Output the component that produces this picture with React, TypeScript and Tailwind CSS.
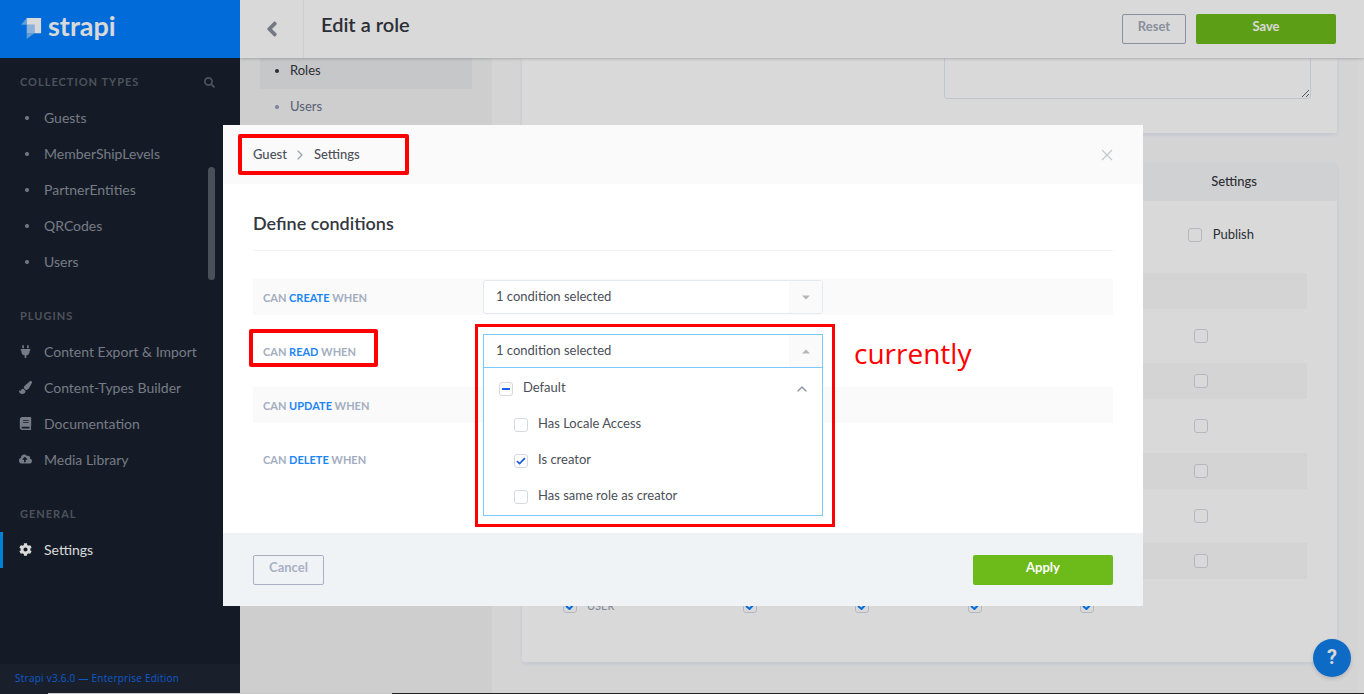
import { ChevronRight, ChevronUp } from "lucide-react";
import { FaAngleLeft, FaBook, FaCloudUploadAlt, FaCog, FaPaintBrush, FaPlug, FaSearch } from "react-icons/fa";

const contentTypes = ["Guests", "MemberShipLevels", "PartnerEntities", "QRCodes", "Users"];
const plugins = [
  { label: "Content Export & Import", icon: <FaPlug size={13} /> },
  { label: "Content-Types Builder", icon: <FaPaintBrush size={13} /> },
  { label: "Documentation", icon: <FaBook size={13} /> },
  { label: "Media Library", icon: <FaCloudUploadAlt size={14} /> },
];
const conditionRows = [
  { action: "CREATE", striped: true },
  { action: "READ", striped: false, open: true },
  { action: "UPDATE", striped: true },
  { action: "DELETE", striped: false },
];

function SectionTitle({ children }: { children: React.ReactNode }) {
  return (
    <div className="flex h-4 items-center justify-between pl-5 pr-[25px] text-[11px] font-bold uppercase tracking-[1px] text-[#5c606c]">
      {children}
    </div>
  );
}

function Checkbox({ checked, dash }: { checked?: boolean; dash?: boolean }) {
  return (
    <span className="flex h-[14px] w-[14px] shrink-0 items-center justify-center rounded-[3px] border border-[#d5d8de] bg-white">
      {checked && (
        <svg width="10" height="8" viewBox="0 0 10 8">
          <path d="M1 4.2 3.6 6.6 9 1.2" fill="none" stroke="#1c5de7" strokeWidth="1.8" />
        </svg>
      )}
      {dash && <span className="h-[2px] w-2 bg-[#1c5de7]" />}
    </span>
  );
}

function BlueCheck() {
  return (
    <span className="flex h-[14px] w-[14px] shrink-0 items-center justify-center rounded-[3px] border border-[#d5d8de] bg-white">
      <svg width="10" height="8" viewBox="0 0 10 8">
        <path d="M1 4 4.5 7 9 2" fill="none" stroke="#007eff" strokeWidth="2" />
      </svg>
    </span>
  );
}

function Caret({ up }: { up?: boolean }) {
  return (
    <span className="flex h-full w-[33px] items-center justify-center bg-[#fafafb]">
      <svg width="8" height="5" viewBox="0 0 8 5">
        <path d={up ? "M4 0.5 8 4.5H0z" : "M0 0.5h8L4 4.5z"} fill="#b3b5b9" />
      </svg>
    </span>
  );
}

function Sidebar() {
  return (
    <aside className="relative flex h-full w-[240px] shrink-0 flex-col bg-[#19202d]">
      <div className="flex h-[58px] items-center bg-[#007eff] pb-[3px] pl-5">
        <svg width="23" height="23" viewBox="0 0 24 24">
          <path d="M7 2h15v16h-7V9H7z" fill="#fff" />
          <path d="M7 9h8v9H7z" fill="#fff" fillOpacity=".65" />
          <path d="M7 2v7H1z" fill="#fff" fillOpacity=".45" />
          <path d="M7 18h8l-8 6z" fill="#fff" fillOpacity=".45" />
        </svg>
        <span className="mb-[5px] ml-[5px] font-['Lato',sans-serif] text-[27px] leading-none font-bold text-white">strapi</span>
      </div>

      <div className="pt-4">
        <SectionTitle>
          Collection Types
          <FaSearch size={11} />
        </SectionTitle>
        <ul className="mt-[10px]">
          {contentTypes.map((item) => (
            <li key={item} className="flex h-9 items-center pb-[2px] pl-[25px] text-[14px] text-[#8b919e]">
              <span className="mr-[15px] mt-[2px] h-[4px] w-[4px] rounded-full bg-[#8b919e]" />
              {item}
            </li>
          ))}
        </ul>

        <div className="mt-7">
          <SectionTitle>Plugins</SectionTitle>
        </div>
        <ul className="mt-[10px]">
          {plugins.map((item) => (
            <li key={item.label} className="flex h-9 items-center pb-[2px] text-[14px] text-[#8b919e]">
              <span className="flex w-[44px] justify-center pl-[19px] pr-[12px]">{item.icon}</span>
              {item.label}
            </li>
          ))}
        </ul>

        <div className="mt-7">
          <SectionTitle>General</SectionTitle>
        </div>
        <div className="mt-[10px] flex h-9 items-center border-l-[3px] border-[#0097f7] pb-[2px] text-[14px] text-white">
          <span className="flex w-[41px] justify-center pl-4 pr-[12px]">
            <FaCog size={13} />
          </span>
          Settings
        </div>
      </div>

      <div className="mt-auto flex h-[30px] items-center bg-[#1f2633] pb-[2px] pl-[15px] font-['Open_Sans',sans-serif] text-[10px] tracking-[0.25px] text-[#1069ec]">
        Strapi v3.6.0 — Enterprise Edition
      </div>

      {/* scrollbar of the nav list */}
      <div className="absolute left-[208px] top-[167px] h-[113px] w-[7px] rounded-full bg-[#585e6a]" />
    </aside>
  );
}

function Page() {
  return (
    <main className="relative flex h-full flex-1 flex-col overflow-hidden">
      <header className="relative z-10 flex h-[58px] shrink-0 items-center bg-white shadow-[0_1px_3px_rgba(0,0,0,0.2)]">
        <div className="flex h-full w-16 items-center justify-center border-r border-[#f3f3f4] text-[#8a8f9b]">
          <FaAngleLeft size={24} />
        </div>
        <h1 className="mb-[11px] ml-[17px] text-[20px] font-semibold text-[#333740]">Edit a role</h1>
        <div className="ml-auto mr-[28px] flex gap-[10px] text-[13px] font-bold">
          <button className="h-[30px] w-16 rounded-[2px] border border-[#a2a9ba] pb-[4px] text-[#a3a9b8]">Reset</button>
          <button className="h-[30px] w-[140px] rounded-[2px] bg-[#6dbb1a] pb-[4px] text-white">Save</button>
        </div>
      </header>

      <div className="flex min-h-0 flex-1">
        <nav className="-mt-[5px] w-[252px] shrink-0 bg-[#f2f3f4] pl-5 pr-5 text-[13px]">
          <div className="flex h-9 items-center bg-[#e9eaeb] pl-[15px] text-[#333740]">
            <span className="mr-[11px] h-[4px] w-[4px] rounded-full bg-[#333740]" />
            Roles
          </div>
          <div className="flex h-9 items-center pl-[15px] text-[#68718a]">
            <span className="mr-[11px] h-[4px] w-[4px] rounded-full bg-[#8f99b2]" />
            Users
          </div>
        </nav>

        <div className="min-w-0 flex-1 bg-[#fafafb] pl-[30px] pr-[27px]">
          <div className="h-[75px] overflow-hidden rounded-b-[2px] bg-white shadow-[0_2px_4px_#e3e9f3]">
            <textarea
              readOnly
              className="-mt-[2px] ml-[422px] block h-[43px] w-[367px] resize rounded-[3px] border border-[#e3e9f3] bg-white"
            />
          </div>

          <div className="mt-[30px] h-[499px] rounded-[2px] bg-white text-[13px] text-[#333740] shadow-[0_2px_4px_#e3e9f3]">
            <div className="flex h-[38px] items-center justify-end rounded-t-[2px] bg-[#f5f6f8] pr-[80px] font-medium">Settings</div>
            <div className="mt-[17px] flex h-[34px] items-center justify-end pr-[83px]">
              <Checkbox />
              <span className="ml-[11px]">Publish</span>
            </div>
            <div className="mt-[21px] px-[30px]">
              {[0, 1, 2, 3, 4, 5, 6].map((i) => (
                <div key={i} className={`mb-[9px] flex h-9 items-center justify-end pr-[99px] ${i % 2 === 0 ? "bg-[#fafafb]" : ""}`}>
                  {i > 0 && <Checkbox />}
                </div>
              ))}
              <div className="grid h-9 grid-cols-[191px_112px_113px_112px_1fr] items-center">
                <div className="flex items-center pl-[11px]">
                  <BlueCheck />
                  <span className="ml-[10px] text-[11px] font-medium text-[#9ea7b8]">USER</span>
                </div>
                <BlueCheck />
                <BlueCheck />
                <BlueCheck />
                <BlueCheck />
              </div>
            </div>
          </div>
        </div>
      </div>

      <button className="absolute left-[1073px] top-[639px] flex h-[38px] w-[38px] items-center justify-center rounded-full bg-[#107ee9] pb-[2px] font-['Roboto',sans-serif] text-[20px] font-bold text-white shadow-[0_2px_4px_rgba(0,0,0,0.15)]">
        ?
      </button>
    </main>
  );
}

function ConditionRow({ action, striped, open }: { action: string; striped: boolean; open?: boolean }) {
  return (
    <div className={`mb-[18px] flex h-9 items-center ${striped ? "bg-[#fafafb]" : ""}`}>
      <div className="w-[230px] pl-[10px] pt-[2px] text-[11px] font-bold text-[#a3adbf]">
        CAN <span className="text-[#1c85f5]">{action}</span> WHEN
      </div>
      {(action === "CREATE" || action === "READ") && (
        <div className="relative w-[340px]">
          <div className={`flex h-[34px] items-center justify-between border bg-white pl-3 text-[13px] text-[#4b4f58] ${open ? "border-[#78caff]" : "rounded-[3px] border-[#e3e9f3]"}`}>
            <span className="pb-[1px]">1 condition selected</span>
            <Caret up={open} />
          </div>
          {open && (
            <div className="absolute left-0 right-0 top-full z-10 border-x border-b border-[#78caff] bg-white pt-[3px] text-[13px] text-[#4b4f58]">
              <div className="flex h-9 items-center pl-[15px] pr-[12px]">
                <Checkbox dash />
                <span className="ml-[10px] pb-[2px]">Default</span>
                <ChevronUp size={16} strokeWidth={2} className="ml-auto text-[#8a94a8]" />
              </div>
              {[
                { label: "Has Locale Access" },
                { label: "Is creator", checked: true },
                { label: "Has same role as creator" },
              ].map((opt) => (
                <div key={opt.label} className="flex h-9 items-center pl-[30px]">
                  <Checkbox checked={opt.checked} />
                  <span className="ml-[10px] pb-[2px]">{opt.label}</span>
                </div>
              ))}
            </div>
          )}
        </div>
      )}
    </div>
  );
}

function Modal() {
  return (
    <div className="absolute left-[223px] top-[125px] z-30 flex h-[481px] w-[920px] flex-col bg-white">
      <div className="flex h-[59px] shrink-0 items-center justify-between bg-[#fafafb] px-[30px] text-[13px] font-medium text-[#4b4f58]">
        <div className="flex items-center">
          Guest
          <ChevronRight size={16} strokeWidth={2} className="mx-[5.5px] text-[#9ea7b8]" />
          Settings
        </div>
        <svg width="12" height="12" viewBox="0 0 12 12">
          <path d="M1 1 11 11M11 1 1 11" stroke="#c3c5c8" strokeWidth="1.1" />
        </svg>
      </div>

      <div className="flex-1 px-[30px]">
        <div className="border-b border-[#f0f1f3] pb-[15px] pt-[27px]">
          <h2 className="h-6 text-[18px] font-semibold leading-6 text-[#333740]">Define conditions</h2>
        </div>
        <div className="mt-7">
          {conditionRows.map((row) => (
            <ConditionRow key={row.action} {...row} />
          ))}
        </div>
      </div>

      <div className="flex h-[73px] shrink-0 items-center justify-between bg-[#eff3f6] px-[30px] text-[13px] font-bold">
        <button className="h-[30px] w-[71px] rounded-[2px] border border-[#a9b0c3] pb-[4px] text-[#a9b0c3]">Cancel</button>
        <button className="h-[30px] w-[140px] rounded-[2px] bg-[#6dbb1a] pb-[4px] text-white">Apply</button>
      </div>
    </div>
  );
}

export default function App() {
  return (
    <div className="relative flex h-[694px] w-[1364px] overflow-hidden font-['Lato',sans-serif]">
      <Sidebar />
      <Page />

      {/* dim layer behind the dialog */}
      <div className="absolute inset-0 z-20 bg-black/15" />
      <Modal />

      {/* annotations drawn on the screenshot */}
      <div className="absolute left-[238px] top-[134px] z-40 h-[41px] w-[171px] rounded-[2px] border-[4px] border-[#ff0000]" />
      <div className="absolute left-[249px] top-[329px] z-40 h-[38px] w-[129px] rounded-[2px] border-[4px] border-[#ff0000]" />
      <div className="absolute left-[475px] top-[324px] z-40 h-[203px] w-[360px] border-[3px] border-[#ff0000]" />
      <div className="absolute left-[854px] top-[334px] z-40 font-['Open_Sans',sans-serif] text-[28px] leading-[38px] text-[#ff0000]">currently</div>

      <div className="absolute bottom-0 left-[48px] z-40 h-px w-[344px] bg-[#c8c8c8]" />
      <div className="absolute bottom-0 left-[392px] z-40 h-px w-[972px] bg-[#222222]" />
      <div className="absolute bottom-0 right-0 top-[58px] z-[25] w-[7px] bg-white/5" />
    </div>
  );
}
